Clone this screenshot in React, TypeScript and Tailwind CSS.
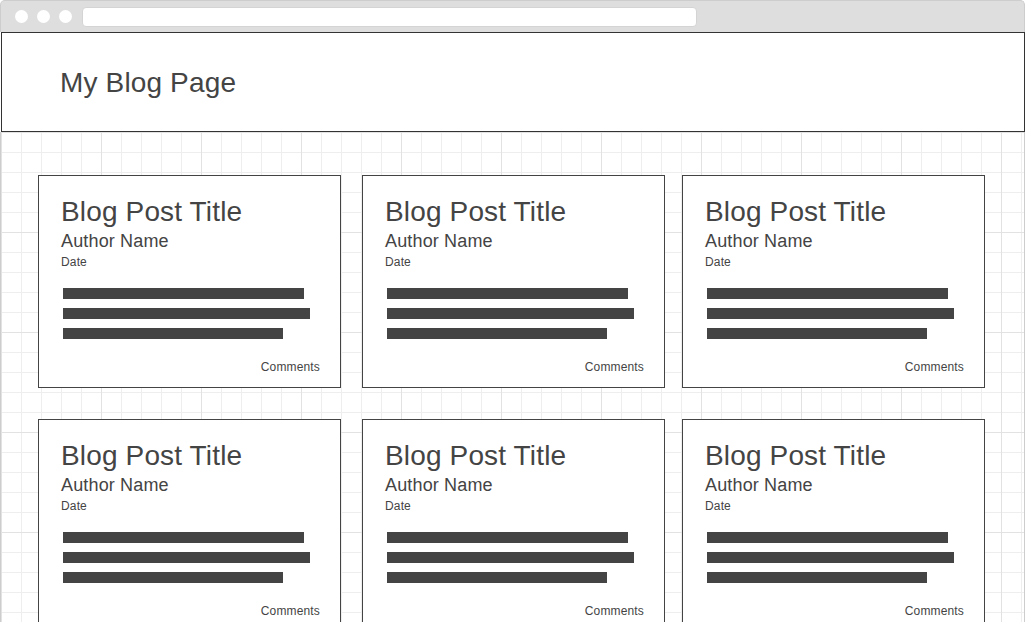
import React from "react";

type Post = {
  id: number;
  title: string;
  author: string;
  date: string;
};

const posts: Post[] = [1, 2, 3, 4, 5, 6].map((id) => ({
  id,
  title: "Blog Post Title",
  author: "Author Name",
  date: "Date",
}));

// placeholder lines standing in for the excerpt
const excerptBars = ["w-[241px]", "w-[247px]", "w-[220px]"];

const PostCard = ({ post }: { post: Post }) => {
  return (
    <div className="w-[303px] h-[213px] border border-[#444] bg-white flex flex-col pt-[20px] pl-[22px] pr-[20px] text-[#444] tracking-[0.15px]">
      <div className="text-[28px] leading-[32px]">{post.title}</div>
      <div className="mt-[2px] text-[18px] leading-[22px]">{post.author}</div>
      <div className="mt-[2px] text-[12px] leading-[16px]">{post.date}</div>
      <div className="mt-[18px] ml-[2px] flex flex-col gap-[9px]">
        {excerptBars.map((w, i) => (
          <div key={i} className={`h-[11px] bg-[#444] ${w}`} />
        ))}
      </div>
      <div className="mt-[20px] text-right text-[12px] leading-[16px]">
        Comments
      </div>
    </div>
  );
};

const App = () => {
  return (
    <div className="w-[1025px] h-[622px] overflow-hidden bg-white flex flex-col font-['Liberation_Sans',Arial,sans-serif]">
      {/* browser chrome */}
      <div className="h-[32px] shrink-0 bg-[#dedede] border-t border-l border-r border-[#cdcdcd] rounded-t-[5px] flex items-center pl-[14px]">
        <div className="flex gap-[9px]">
          <span className="w-[13px] h-[13px] rounded-full bg-white" />
          <span className="w-[13px] h-[13px] rounded-full bg-white" />
          <span className="w-[13px] h-[13px] rounded-full bg-white" />
        </div>
        <div className="ml-[10px] w-[615px] h-[20px] rounded-[4px] bg-white border border-[#d4d4d4]" />
      </div>

      <div className="h-[100px] shrink-0 ml-[1px] border border-[#333] bg-white pl-[58px] pt-[34px]">
        <h1 className="text-[28px] leading-[32px] tracking-[0.15px] text-[#444]">My Blog Page</h1>
      </div>

      <div className="flex-1 w-[1025px] border-l border-r border-[#cdcdcd] pt-[43px] pl-[37px] bg-white bg-[linear-gradient(to_right,#e2e2e2_1px,transparent_1px),linear-gradient(to_bottom,#e2e2e2_1px,transparent_1px),linear-gradient(to_right,#eeeeee_1px,transparent_1px),linear-gradient(to_bottom,#eeeeee_1px,transparent_1px)] bg-[size:100px_100px,100px_100px,20px_20px,20px_20px]">
        <div className="grid grid-cols-[324px_320px_303px] gap-y-[31px]">
          {posts.map((post) => (
            <PostCard key={post.id} post={post} />
          ))}
        </div>
      </div>
    </div>
  );
};

export default App;
